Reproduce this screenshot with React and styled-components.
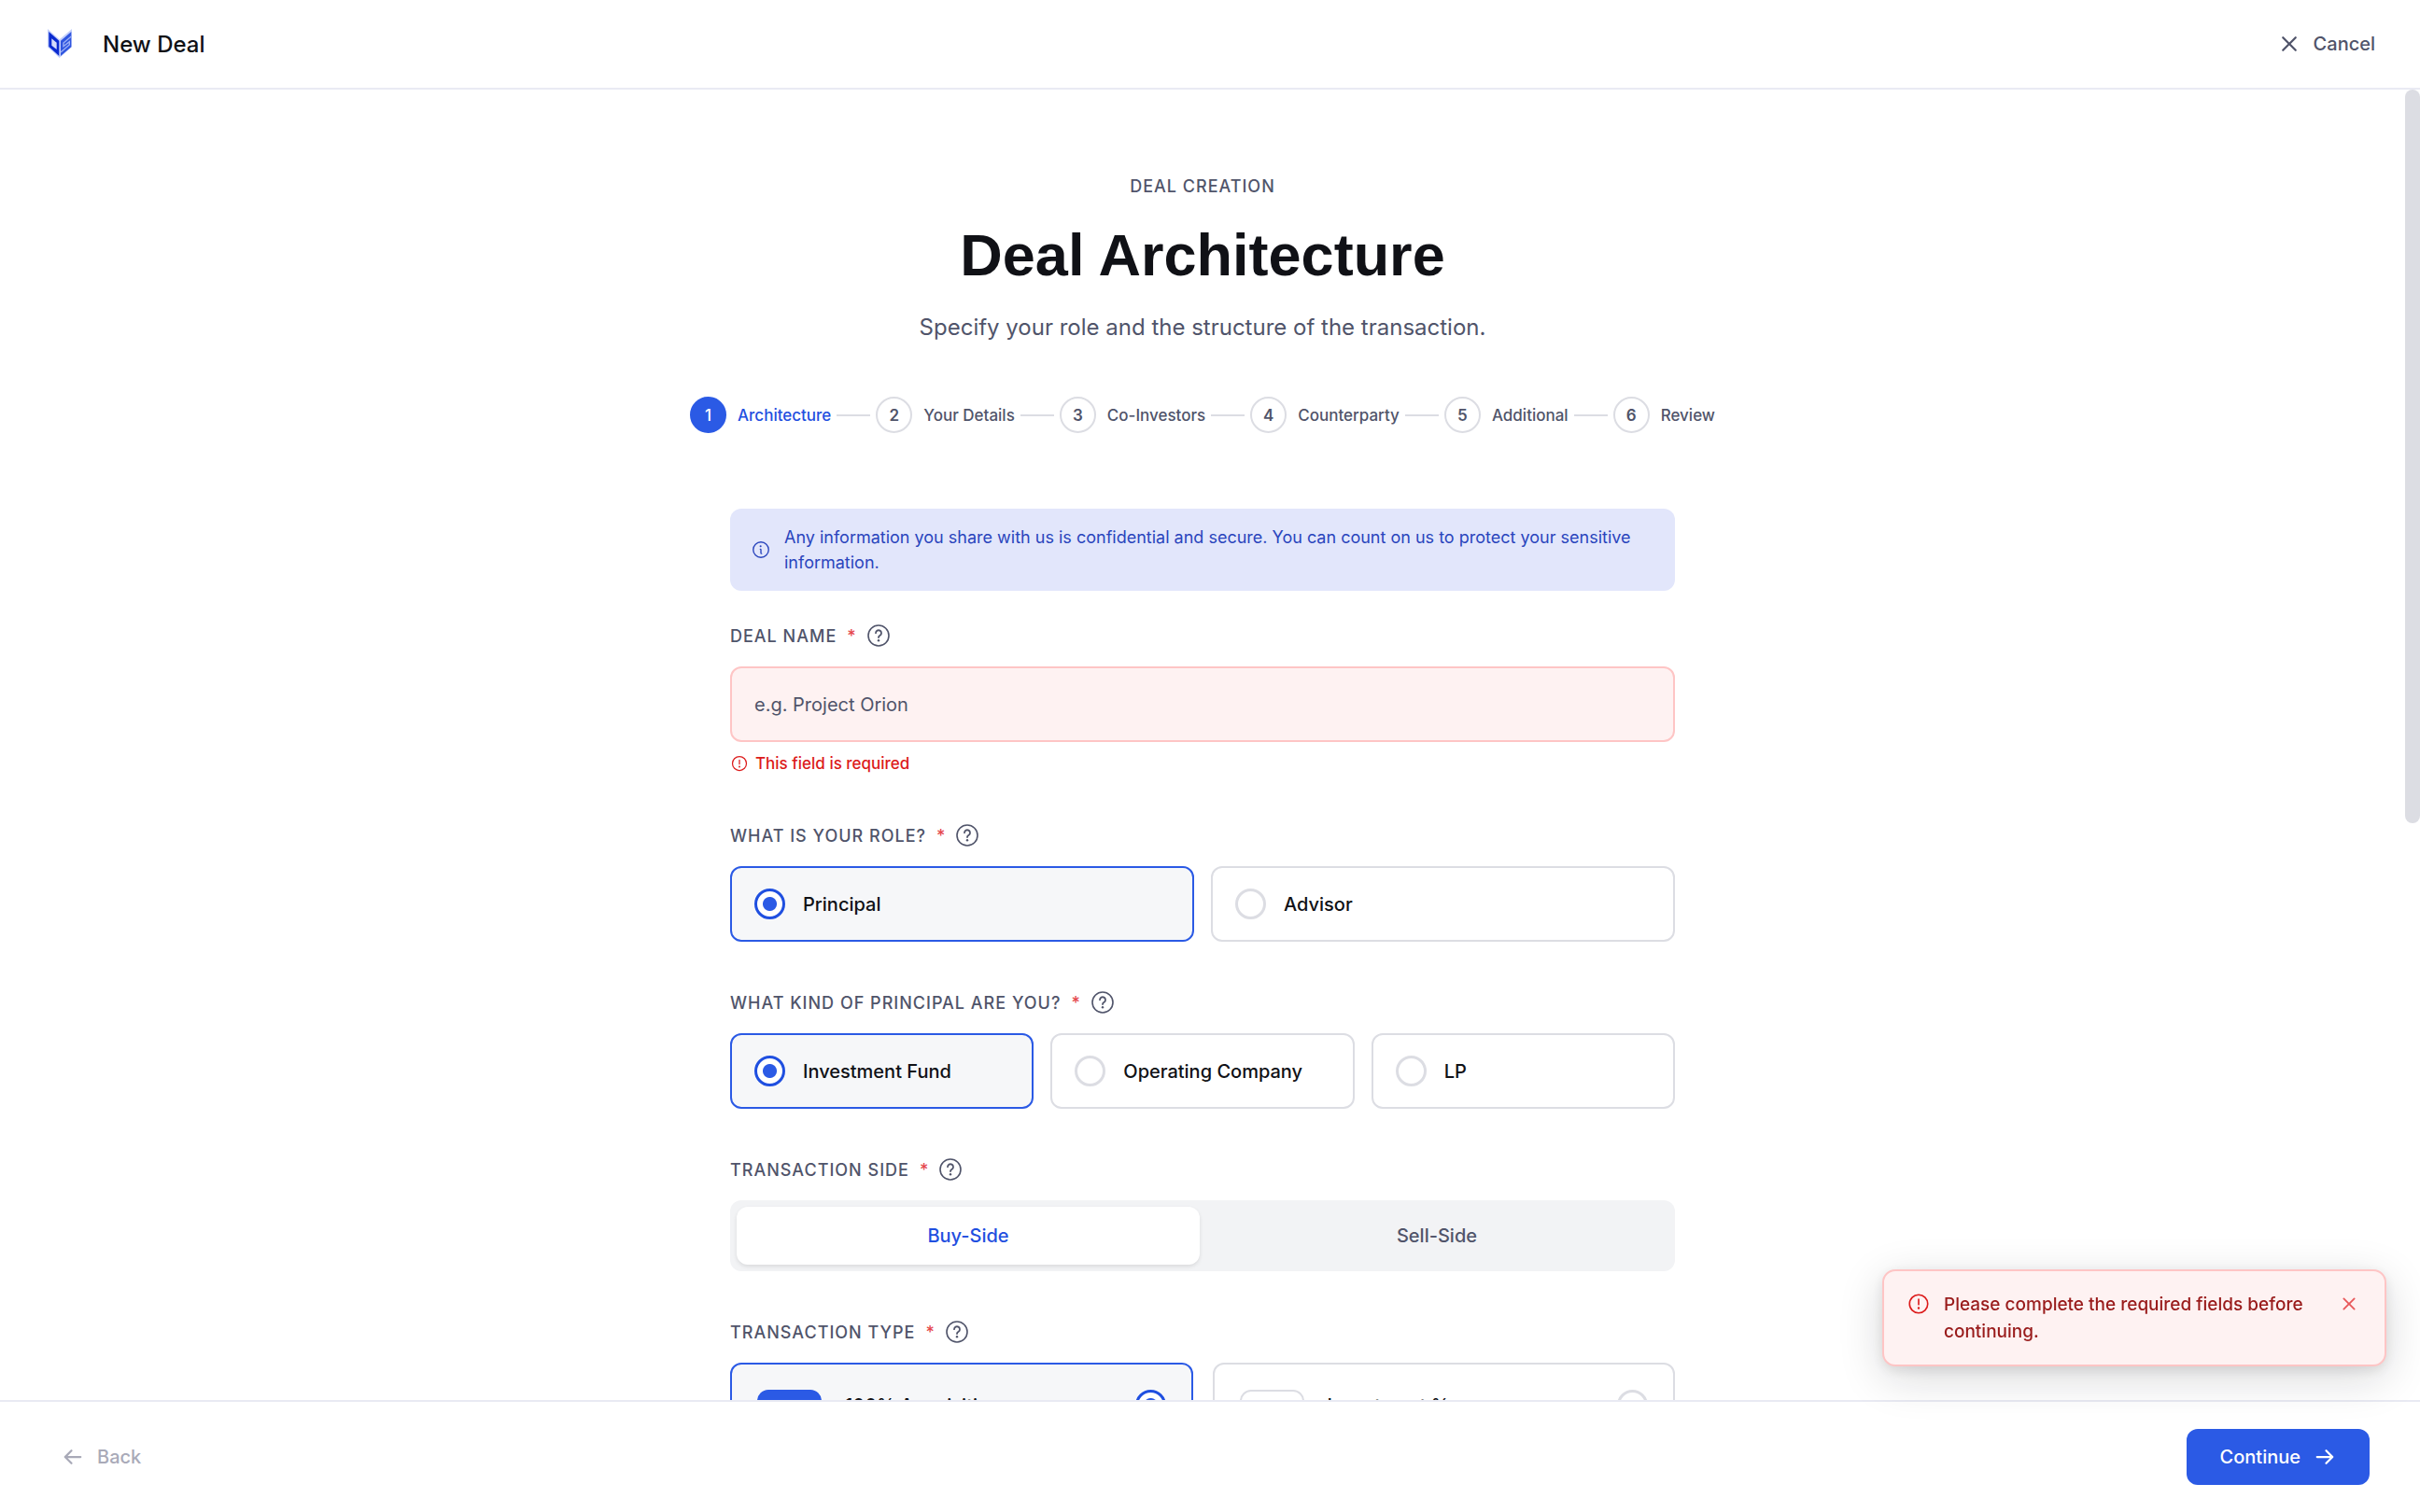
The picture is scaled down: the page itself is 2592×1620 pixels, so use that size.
import { useState } from "react";
import styled, { createGlobalStyle, css } from "styled-components";
import {
  PiArrowLeftBold,
  PiArrowRightBold,
  PiInfo,
  PiWarningCircle,
  PiXBold,
} from "react-icons/pi";

const GlobalStyles = createGlobalStyle`
  :root {
    --color-brand: #2b5ae5;
    --color-brand-ink: #1f4fe0;
    --color-ink: #101116;
    --color-grey-700: #50546a;
    --color-grey-400: #a9aab8;
    --color-grey-200: #dcdde3;
    --color-grey-100: #e9eaf3;
    --color-grey-50: #f6f7f9;
    --color-red-50: #fef2f2;
    --color-red-200: #fec5c5;
    --color-red-600: #dc1a1a;
    --color-red-800: #991b1b;
  }

  *,
  *::before,
  *::after {
    box-sizing: border-box;
    margin: 0;
    padding: 0;
  }

  body {
    background-color: #fff;
    color: var(--color-ink);
    font-family: Inter, sans-serif;
    font-size: 20px;
  }

  button,
  input {
    font: inherit;
    color: inherit;
  }

  button {
    border: none;
    background: none;
    cursor: pointer;
  }

  svg {
    display: block;
    flex-shrink: 0;
  }
`;

const Page = styled.div`
  display: flex;
  flex-direction: column;
  height: 100vh;
`;

const Header = styled.header`
  display: flex;
  align-items: center;
  justify-content: space-between;
  height: 96px;
  padding: 0 48px;
  border-bottom: 2px solid var(--color-grey-100);
`;

const Brand = styled.div`
  display: flex;
  align-items: center;
  gap: 30px;
  font-size: 24px;
  font-weight: 500;
`;

const TextButton = styled.button`
  display: flex;
  align-items: center;
  gap: 14px;
  color: ${(props) =>
    props.$muted ? "var(--color-grey-400)" : "var(--color-grey-700)"};
  font-weight: 500;
`;

const Body = styled.div`
  display: flex;
  flex: 1;
  min-height: 0;
`;

const Scroller = styled.main`
  display: flex;
  flex: 1;
  flex-direction: column;
  align-items: center;
  overflow: hidden;
  padding-top: 92px;
`;

const ScrollTrack = styled.div`
  width: 16px;
`;

const ScrollThumb = styled.div`
  height: 56%;
  border-radius: 8px;
  background-color: var(--color-grey-200);
`;

const Eyebrow = styled.p`
  color: var(--color-grey-700);
  font-size: 18px;
  font-weight: 500;
  letter-spacing: 1px;
  line-height: 24px;
  text-transform: uppercase;
`;

const Title = styled.h1`
  margin-top: 25px;
  font-family: "Liberation Sans", sans-serif;
  font-size: 63px;
  font-weight: 700;
  line-height: 72px;
`;

const Subtitle = styled.p`
  margin-top: 22px;
  color: var(--color-grey-700);
  font-size: 24px;
  line-height: 40px;
`;

const Stepper = styled.ol`
  display: flex;
  align-items: center;
  gap: 6px;
  margin-top: 54px;
  list-style: none;
`;

const Step = styled.li`
  display: flex;
  align-items: center;
  gap: 6px;
  color: ${(props) =>
    props.$active ? "var(--color-brand-ink)" : "var(--color-grey-700)"};
  font-size: 17px;
  font-weight: 500;

  &:not(:last-child)::after {
    content: "";
    width: 36px;
    height: 2px;
    background-color: var(--color-grey-200);
  }
`;

const StepNumber = styled.span`
  display: flex;
  align-items: center;
  justify-content: center;
  width: 39px;
  height: 39px;
  margin-right: 6px;
  border: 2px solid var(--color-grey-200);
  border-radius: 50%;
  font-weight: 600;

  ${(props) =>
    props.$active &&
    css`
      border-color: var(--color-brand);
      background-color: var(--color-brand);
      color: #fff;
      font-weight: 500;
    `}
`;

const Form = styled.form`
  display: flex;
  flex-direction: column;
  gap: 53px;
  width: 100%;
  max-width: 1012px;
  margin-top: 81px;
`;

const Intro = styled.div`
  display: flex;
  flex-direction: column;
  gap: 36px;
`;

const Notice = styled.div`
  display: flex;
  align-items: center;
  gap: 14px;
  padding: 17px 22px;
  border-radius: 12px;
  background-color: #e2e6fb;
  color: #2a45bd;
  font-size: 18px;
  line-height: 27px;
`;

const Field = styled.div`
  display: flex;
  flex-direction: column;
  gap: 21px;
`;

const LabelRow = styled.div`
  display: flex;
  align-items: center;
  gap: 11px;
  height: 24px;
  color: var(--color-grey-700);
  font-size: 18px;
  font-weight: 500;
  letter-spacing: 1px;
  text-transform: uppercase;
`;

const Required = styled.span`
  color: #e5484d;
`;

const HelpButton = styled.button`
  color: var(--color-grey-700);
`;

const TextInput = styled.input`
  width: 100%;
  height: 81px;
  padding: 0 24px;
  border: 2px solid var(--color-red-200);
  border-radius: 12px;
  background-color: var(--color-red-50);

  &::placeholder {
    color: var(--color-grey-700);
    opacity: 1;
  }
`;

const ErrorText = styled.p`
  display: flex;
  align-items: center;
  gap: 7px;
  height: 25px;
  margin-top: -11px;
  color: var(--color-red-600);
  font-size: 17px;
  font-weight: 500;
`;

const Options = styled.div`
  display: grid;
  grid-template-columns: repeat(${(props) => props.$columns}, 1fr);
  gap: ${(props) => props.$gap || 18}px;
`;

const OptionCard = styled.label`
  display: flex;
  align-items: ${(props) => (props.$tall ? "flex-start" : "center")};
  gap: ${(props) => (props.$tall ? 25 : 19)}px;
  height: ${(props) => (props.$tall ? 160 : 81)}px;
  padding: ${(props) => (props.$tall ? "27px" : "0 24px")};
  border: 2px solid var(--color-grey-200);
  border-radius: 12px;
  font-weight: 500;
  cursor: pointer;

  &:has(input:checked) {
    border-color: var(--color-brand);
    background-color: var(--color-grey-50);
  }
`;

const Radio = styled.input`
  flex-shrink: 0;
  width: 33px;
  height: 33px;
  border: 3px solid var(--color-grey-200);
  border-radius: 50%;
  background-color: #fff;
  appearance: none;

  &:checked {
    border-color: var(--color-brand-ink);
    background: radial-gradient(circle, var(--color-brand) 7px, #fff 8px);
  }
`;

const TypeBadge = styled.span`
  width: 69px;
  height: 69px;
  border: 2px solid
    ${(props) =>
      props.$active ? "var(--color-brand)" : "var(--color-grey-200)"};
  border-radius: 12px;
  background-color: ${(props) =>
    props.$active ? "var(--color-brand)" : "#fff"};
`;

const TypeName = styled.span`
  flex: 1;
  padding-top: 5px;
  line-height: 24px;
`;

const Segments = styled.div`
  display: grid;
  grid-template-columns: 1fr 1fr;
  gap: 6px;
  padding: 7px;
  border-radius: 12px;
  background-color: #f2f3f5;
`;

const Segment = styled.button`
  height: 62px;
  border-radius: 12px;
  color: var(--color-grey-700);
  font-weight: 500;

  ${(props) =>
    props.$active &&
    css`
      background-color: #fff;
      box-shadow: 0 2px 4px rgb(0 0 0 / 0.1);
      color: var(--color-brand-ink);
    `}
`;

const Footer = styled.footer`
  display: flex;
  align-items: center;
  justify-content: space-between;
  height: 120px;
  padding: 0 54px 0 66px;
  border-top: 2px solid var(--color-grey-100);
`;

const PrimaryButton = styled.button`
  display: flex;
  align-items: center;
  gap: 14px;
  height: 60px;
  padding: 0 36px;
  border-radius: 12px;
  background-color: var(--color-brand);
  color: #fff;
  font-weight: 500;
`;

const Toast = styled.div`
  position: fixed;
  right: 36px;
  bottom: 156px;
  display: flex;
  align-items: flex-start;
  gap: 14px;
  width: 540px;
  padding: 21px 24px;
  border: 2px solid var(--color-red-200);
  border-radius: 14px;
  background-color: var(--color-red-50);
  box-shadow: 0 12px 48px rgb(20 21 26 / 0.16), 0 4px 14px rgb(20 21 26 / 0.1);
  color: var(--color-red-800);
  font-size: 19px;
  font-weight: 500;
  line-height: 29px;

  & > svg {
    margin-top: 1px;
    color: var(--color-red-600);
  }
`;

const ToastText = styled.p`
  flex: 1;
`;

const ToastClose = styled.button`
  padding: 4px;
  color: #e8595b;
`;

const steps = [
  "Architecture",
  "Your Details",
  "Co-Investors",
  "Counterparty",
  "Additional",
  "Review",
];

function Logo() {
  return (
    <svg width="32" height="32" viewBox="0 0 96 96" aria-hidden="true">
      <path d="M9 0 47 34 87 0V58L47 93 9 58Z" fill="#c3cffb" />
      <path d="M13 9 46 38V87L13 57Z" fill="#0b2bd0" />
      <path d="M22 31 38 44V66L22 53Z" fill="#d5dcfb" />
      <path d="M51 38 85 9V58L51 87Z" fill="#2f55df" />
      <path
        d="M85 24 60 45V56L79 41V51L51 75"
        fill="none"
        stroke="#9db0f6"
        strokeWidth="4"
      />
    </svg>
  );
}

function HelpIcon() {
  return (
    <svg
      width="24"
      height="24"
      viewBox="0 0 24 24"
      fill="none"
      stroke="currentColor"
      strokeLinecap="round"
      aria-hidden="true"
    >
      <circle cx="12" cy="12" r="11" strokeWidth="1.6" />
      <path
        d="M9 9.2a3 3 0 1 1 4.6 2.6c-1 .6-1.6 1.1-1.6 2.2"
        strokeWidth="1.8"
      />
      <circle cx="12" cy="17.2" r="1.2" fill="currentColor" stroke="none" />
    </svg>
  );
}

function FieldLabel({ id, htmlFor, children }) {
  return (
    <LabelRow>
      {htmlFor ? (
        <label htmlFor={htmlFor}>{children}</label>
      ) : (
        <span id={id}>{children}</span>
      )}
      <Required>*</Required>
      <HelpButton type="button" aria-label="Help">
        <HelpIcon />
      </HelpButton>
    </LabelRow>
  );
}

function RadioField({ name, label, options }) {
  return (
    <Field role="radiogroup" aria-labelledby={`${name}-label`}>
      <FieldLabel id={`${name}-label`}>{label}</FieldLabel>
      <Options $columns={options.length}>
        {options.map((option, i) => (
          <OptionCard key={option}>
            <Radio type="radio" name={name} defaultChecked={i === 0} />
            {option}
          </OptionCard>
        ))}
      </Options>
    </Field>
  );
}

function TypeField() {
  const [type, setType] = useState("100% Acquisition");

  return (
    <Field role="radiogroup" aria-labelledby="type-label">
      <FieldLabel id="type-label">Transaction type</FieldLabel>
      <Options $columns={2} $gap={21}>
        {["100% Acquisition", "Investment %"].map((option) => (
          <OptionCard key={option} $tall>
            <TypeBadge $active={type === option} />
            <TypeName>{option}</TypeName>
            <Radio
              type="radio"
              name="type"
              checked={type === option}
              onChange={() => setType(option)}
            />
          </OptionCard>
        ))}
      </Options>
    </Field>
  );
}

function App() {
  const [side, setSide] = useState("Buy-Side");

  return (
    <>
      <GlobalStyles />
      <Page>
        <Header>
          <Brand>
            <Logo />
            New Deal
          </Brand>
          <TextButton type="button">
            <PiXBold size={24} />
            Cancel
          </TextButton>
        </Header>

        <Body>
          <Scroller>
            <Eyebrow>Deal creation</Eyebrow>
            <Title>Deal Architecture</Title>
            <Subtitle>
              Specify your role and the structure of the transaction.
            </Subtitle>

            <Stepper>
              {steps.map((step, i) => (
                <Step key={step} $active={i === 0}>
                  <StepNumber $active={i === 0}>{i + 1}</StepNumber>
                  {step}
                </Step>
              ))}
            </Stepper>

            <Form>
              <Intro>
                <Notice>
                  <PiInfo size={22} />
                  <p>
                    Any information you share with us is confidential and
                    secure. You can count on us to protect your sensitive
                    information.
                  </p>
                </Notice>
                <Field>
                  <FieldLabel htmlFor="deal-name">Deal name</FieldLabel>
                  <TextInput id="deal-name" placeholder="e.g. Project Orion" />
                  <ErrorText>
                    <PiWarningCircle size={20} />
                    This field is required
                  </ErrorText>
                </Field>
              </Intro>

              <RadioField
                name="role"
                label="What is your role?"
                options={["Principal", "Advisor"]}
              />
              <RadioField
                name="principal"
                label="What kind of principal are you?"
                options={["Investment Fund", "Operating Company", "LP"]}
              />

              <Field>
                <FieldLabel id="side-label">Transaction side</FieldLabel>
                <Segments role="group" aria-labelledby="side-label">
                  {["Buy-Side", "Sell-Side"].map((option) => (
                    <Segment
                      key={option}
                      type="button"
                      $active={side === option}
                      aria-pressed={side === option}
                      onClick={() => setSide(option)}
                    >
                      {option}
                    </Segment>
                  ))}
                </Segments>
              </Field>

              <TypeField />
            </Form>
          </Scroller>
          <ScrollTrack>
            <ScrollThumb />
          </ScrollTrack>
        </Body>

        <Footer>
          <TextButton type="button" $muted disabled>
            <PiArrowLeftBold size={24} />
            Back
          </TextButton>
          <PrimaryButton type="button">
            Continue
            <PiArrowRightBold size={24} />
          </PrimaryButton>
        </Footer>

        <Toast role="alert">
          <PiWarningCircle size={26} />
          <ToastText>
            Please complete the required fields before continuing.
          </ToastText>
          <ToastClose type="button" aria-label="Dismiss">
            <PiXBold size={20} />
          </ToastClose>
        </Toast>
      </Page>
    </>
  );
}

export default App;
